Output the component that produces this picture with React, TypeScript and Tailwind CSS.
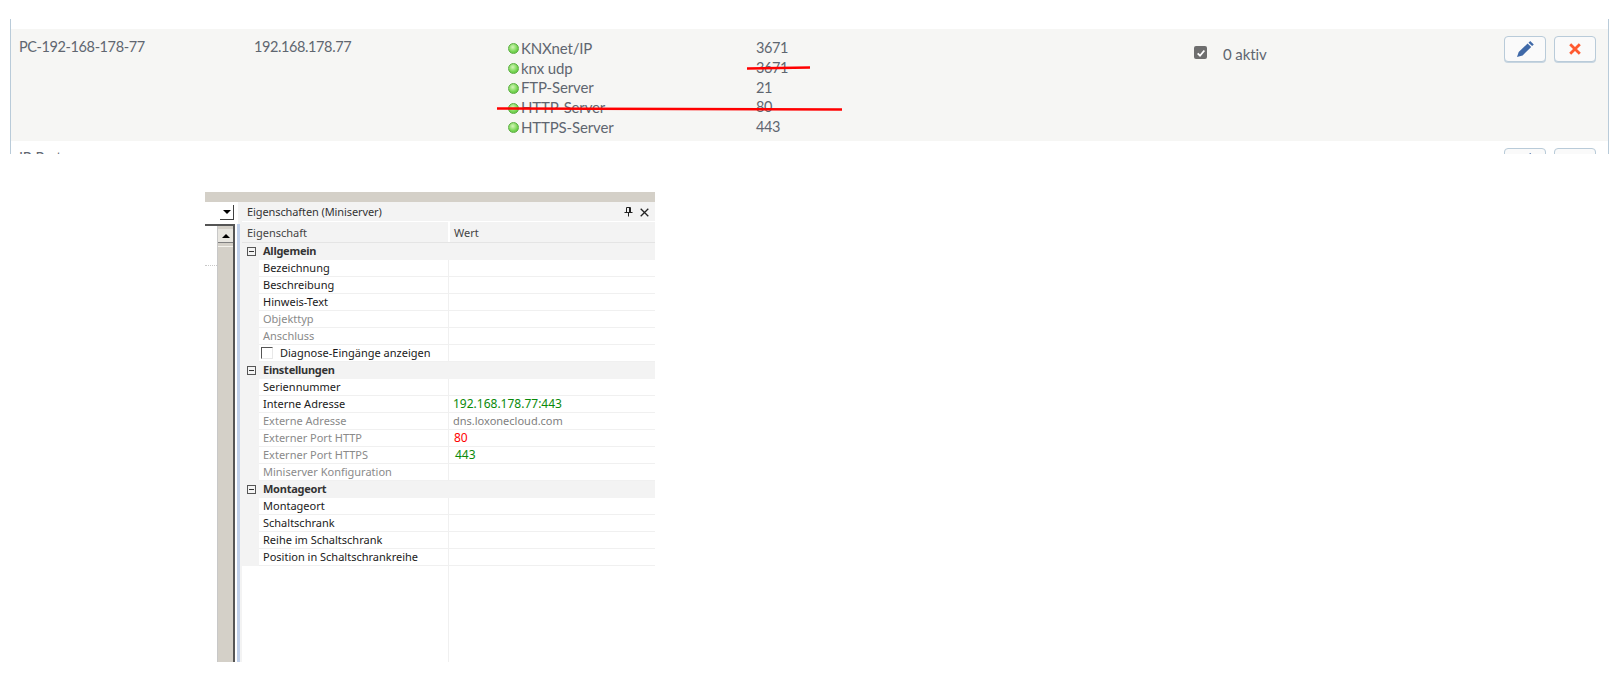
import React from 'react';

const ui = 'font-["Lato","Open_Sans",sans-serif]';
const win = 'font-["Noto_Sans","Open_Sans",sans-serif]';

const services = [
  { name: 'KNXnet/IP', port: '3671' },
  { name: 'knx udp', port: '3671' },
  { name: 'FTP-Server', port: '21' },
  { name: 'HTTP-Server', port: '80' },
  { name: 'HTTPS-Server', port: '443' },
];

type Row = { label: string; tone?: 'dim' | 'check'; value?: string; valueClass?: string };

const groups: { title: string; rows: Row[] }[] = [
  {
    title: 'Allgemein',
    rows: [
      { label: 'Bezeichnung' },
      { label: 'Beschreibung' },
      { label: 'Hinweis-Text' },
      { label: 'Objekttyp', tone: 'dim' },
      { label: 'Anschluss', tone: 'dim' },
      { label: 'Diagnose-Eingänge anzeigen', tone: 'check' },
    ],
  },
  {
    title: 'Einstellungen',
    rows: [
      { label: 'Seriennummer' },
      { label: 'Interne Adresse', value: '192.168.178.77:443', valueClass: 'text-[#0a8a0a] text-[12px] pl-[4px]' },
      { label: 'Externe Adresse', tone: 'dim', value: 'dns.loxonecloud.com', valueClass: 'text-[#808080] pl-[4px]' },
      { label: 'Externer Port HTTP', tone: 'dim', value: '80', valueClass: 'text-[#ff0000] text-[12px] pl-[5px]' },
      { label: 'Externer Port HTTPS', tone: 'dim', value: '443', valueClass: 'text-[#0a8a0a] text-[12px] pl-[6px]' },
      { label: 'Miniserver Konfiguration', tone: 'dim' },
    ],
  },
  {
    title: 'Montageort',
    rows: [
      { label: 'Montageort' },
      { label: 'Schaltschrank' },
      { label: 'Reihe im Schaltschrank' },
      { label: 'Position in Schaltschrankreihe' },
    ],
  },
];

function Pencil() {
  return (
    <svg viewBox="0 0 17 16" className="w-[17px] h-[16px]" fill="#3f69a8">
      <path d="M13.2 0l3.6 3.4-1.7 1.7-3.6-3.4zM10.6 2.6l3.6 3.4-8.6 8.4L0 16l1.7-5z" />
    </svg>
  );
}

function Cross() {
  return (
    <svg viewBox="0 0 12 12" className="w-[12px] h-[12px]" stroke="#ff5a30" strokeWidth="2.8" fill="none">
      <path d="M1.2 1.2l9.6 9.6M10.8 1.2l-9.6 9.6" />
    </svg>
  );
}

function RowButton({ children }: { children?: React.ReactNode }) {
  return (
    <button className="w-[42px] h-[26px] flex items-center justify-center rounded-[4px] border border-[#b9cbd9] bg-[#fafafa] shadow-[0_1px_0_#c7d5e0]">
      {children}
    </button>
  );
}

function StatusDot() {
  return (
    <span className="shrink-0 w-[11px] h-[11px] mt-[2px] rounded-full border border-[#5cae42] bg-[radial-gradient(circle_at_42%_35%,#d4f5b8,#74d450_60%,#58b83c)]" />
  );
}

function ServerTable() {
  return (
    <div className={`relative h-[135px] mt-[19px] ml-[10px] mr-[2px] border-x border-x-[#b9cbd9] overflow-hidden ${ui}`}>
      <div className="mt-[10px] h-[112px] bg-[#f6f6f4] flex text-[14.5px] tracking-[-0.4px] text-[#5f6670]">
        <div className="w-[243px] pl-[8px] pt-[8px] leading-[20px]">PC-192-168-178-77</div>
        <div className="w-[254px] pt-[8px] leading-[20px]">192.168.178.77</div>
        <div className="w-[248px] pt-[9px] flex flex-col">
          {services.map((s) => (
            <div key={s.name + s.port} className="h-[19.75px] leading-[20px] flex items-center gap-[2px] text-[15px] tracking-[-0.15px]">
              <StatusDot />
              {s.name}
            </div>
          ))}
        </div>
        <div className="w-[438px] pt-[9px] flex flex-col">
          {services.map((s) => (
            <div key={s.name} className="h-[19.75px] leading-[20px]">{s.port}</div>
          ))}
        </div>
        <div className="flex-1 pt-[15px] flex items-start gap-[16px]">
          <span className="mt-[2px] w-[13px] h-[13px] rounded-[2px] bg-[#6e6e6e] flex items-center justify-center">
            <svg viewBox="0 0 12 12" className="w-[10px] h-[10px]" fill="none" stroke="#fff" strokeWidth="2.2">
              <path d="M2 6.5l2.8 2.8L10 3" />
            </svg>
          </span>
          <span className="leading-[20px] text-[15px] tracking-[-0.1px]">0 aktiv</span>
        </div>
        <div className="pt-[7px] pr-[12px] flex items-start gap-[8px]">
          <RowButton><Pencil /></RowButton>
          <RowButton><Cross /></RowButton>
        </div>
      </div>
      <div className="flex justify-between h-[13px]">
        <div className="pl-[8px] pt-[7px] leading-[20px] text-[14.5px] tracking-[-0.4px] text-[#5f6670]">IP-Port</div>
        <div className="pt-[7px] pr-[12px] flex items-start gap-[8px]">
          <RowButton><Pencil /></RowButton>
          <RowButton />
        </div>
      </div>
      {/* hand drawn red strokes over the table */}
      <svg className="absolute left-[-11px] top-[-19px] pointer-events-none" width="1611" height="154">
        <path d="M747 68.5L810 67.5" stroke="#ff0000" strokeWidth="2.6" fill="none" />
        <path d="M497 108.5L842 109.5" stroke="#ff0000" strokeWidth="2.6" fill="none" />
      </svg>
    </div>
  );
}

function SideStrip() {
  return (
    <div className="w-[37px] shrink-0 flex flex-col bg-white">
      <div className="h-[22px] shrink-0 flex">
        <div className="w-[33px] shrink-0 flex justify-end items-start pt-[3px] pr-[4px]">
          <span className="w-[14px] h-[15px] flex items-center justify-center border-r border-b border-r-[#404040] border-b-[#404040] bg-white">
            <span className="w-0 h-0 border-x-[4px] border-x-transparent border-t-[4px] border-t-black" />
          </span>
        </div>
        <div className="flex-1 bg-[#f3f3f3]" />
      </div>
      <div className="flex-1 flex min-h-0">
        <div className="w-[30px] shrink-0 flex flex-col">
          <div className="h-[2px] shrink-0 bg-[#555]" />
          <div className="flex-1 flex min-h-0">
            <div className="w-[12px] shrink-0 flex flex-col">
              <div className="mt-[39px] border-t border-dotted border-t-[#c8c8c8]" />
            </div>
            <div className="flex-1 border-l border-l-[#c8c8c8] bg-[#d4d0c8] border-r-[2px] border-r-[#555] flex flex-col">
              <span className="mt-[3px] h-[14px] shrink-0 flex items-center justify-center bg-[#e8e6e0] border-b border-b-[#808080]">
                <span className="w-0 h-0 border-x-[4px] border-x-transparent border-b-[4px] border-b-black" />
              </span>
              <span className="mt-[3px] h-[1px] shrink-0 bg-[#f4f2ec]" />
            </div>
          </div>
        </div>
        <div className="w-[2px] shrink-0 bg-white" />
        <div className="w-[3px] shrink-0 bg-[#c0d0ea]" />
        <div className="flex-1 bg-[#f3f3f3]" />
      </div>
    </div>
  );
}

function PropertyPanel() {
  return (
    <div className={`mt-[38px] ml-[205px] w-[450px] h-[470px] flex flex-col text-[11px] text-[#1a1a1a] ${win}`}>
      <div className="h-[10px] shrink-0 bg-[#d4d0c8]" />
      <div className="flex-1 flex min-h-0">
        <SideStrip />
        <div className="flex-1 min-w-0 flex flex-col bg-white">
          <div className="h-[20px] shrink-0 bg-[#f3f3f3] flex items-center justify-between pt-[1px] pl-[5px] pr-[6px] text-[#333] border-b border-b-white">
            <span className="tracking-[-0.1px]">Eigenschaften (Miniserver)</span>
            <span className="flex items-center gap-[7px]">
              <svg viewBox="0 0 9 10" className="w-[9px] h-[10px]" fill="none" stroke="#222" strokeWidth="1">
                <path d="M2.5 .5h4v5h-4zM.5 5.5h8M4.5 5.5v4M5.5 1v4" />
              </svg>
              <svg viewBox="0 0 9 9" className="w-[9px] h-[9px]" fill="none" stroke="#222" strokeWidth="1.3">
                <path d="M.7.7l7.6 7.6M8.3.7L.7 8.3" />
              </svg>
            </span>
          </div>
          <div className="h-[21px] shrink-0 flex bg-[#f3f3f3] border-b border-b-[#e4e4e4] text-[#444] leading-[21px]">
            <div className="w-[208px] pl-[5px] border-r-[2px] border-r-white">Eigenschaft</div>
            <div className="pl-[4px]">Wert</div>
          </div>
          {groups.map((g) => (
            <div key={g.title}>
              <div className="h-[17px] bg-[#f3f3f3] flex items-center">
                <span className="w-[9px] h-[9px] ml-[5px] border border-[#555] flex items-center justify-center">
                  <span className="w-[5px] h-[1px] bg-[#333]" />
                </span>
                <span className="ml-[7px] font-bold tracking-[-0.25px] text-[#333]">{g.title}</span>
              </div>
              {g.rows.map((r) => (
                <div key={r.label} className="h-[17px] flex border-b border-b-[#f0f0f0] bg-white">
                  <div className="w-[17px] -mb-[1px] shrink-0 bg-[#f3f3f3]" />
                  <div className={`w-[190px] pl-[4px] border-r border-r-[#f0f0f0] leading-[16px] whitespace-nowrap ${r.tone === 'dim' ? 'text-[#8a8a8a]' : ''}`}>
                    {r.tone === 'check' ? (
                      <span className="flex items-center">
                        <span className="w-[12px] h-[12px] -ml-[2px] mr-[7px] border-l border-t border-l-[#555] border-t-[#555] border-r border-r-[#e8e8e8] border-b border-b-[#e8e8e8]" />
                        {r.label}
                      </span>
                    ) : (
                      r.label
                    )}
                  </div>
                  <div className={`flex-1 leading-[16px] ${r.valueClass ?? ''}`}>{r.value}</div>
                </div>
              ))}
            </div>
          ))}
          <div className="flex-1 flex">
            <div className="w-[207px] border-r border-r-[#f0f0f0]" />
          </div>
        </div>
      </div>
    </div>
  );
}

export default function App() {
  return (
    <div className="w-[1611px] h-[680px] bg-white overflow-hidden flex flex-col">
      <ServerTable />
      <PropertyPanel />
    </div>
  );
}
